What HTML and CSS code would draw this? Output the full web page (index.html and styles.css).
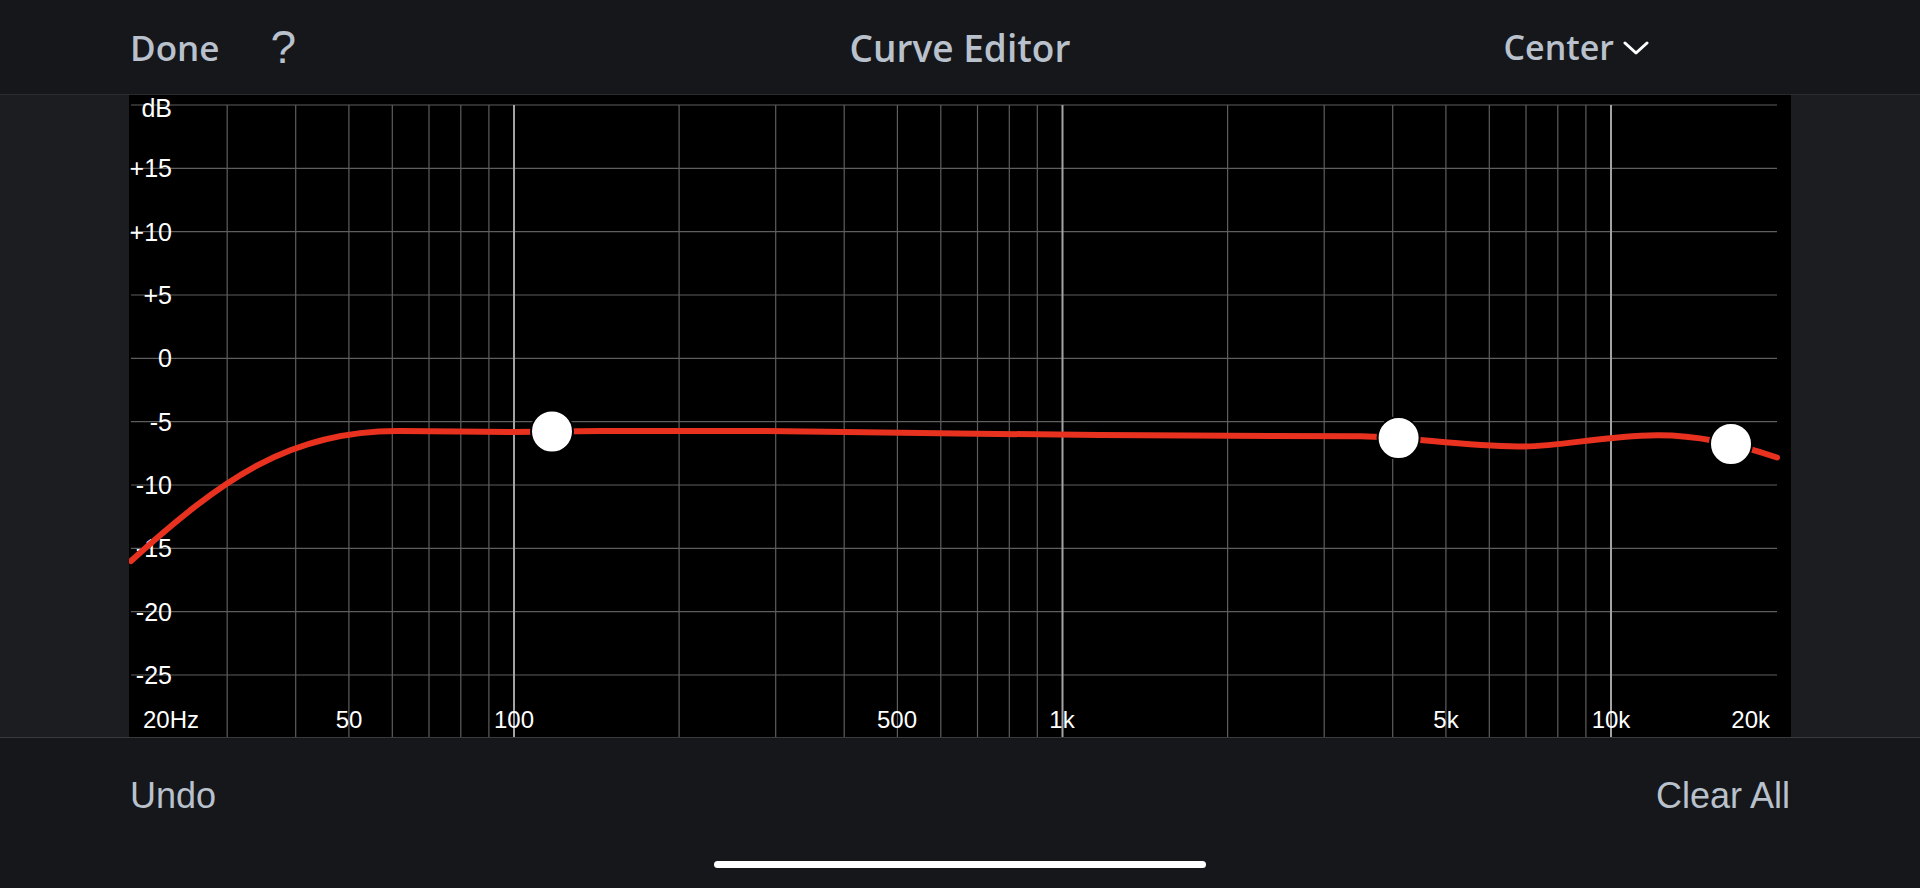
FILE: index.html
```html
<!DOCTYPE html>
<html lang="en">
<head>
    <meta charset="UTF-8">
    <meta name="viewport" content="width=device-width, initial-scale=1.0">
    <title>Curve Editor</title>
    <link rel="stylesheet" href="styles.css">
</head>
<body>

<header class="topbar">
    <div class="topbar-left">
        <button class="nav-btn done">Done</button>
        <button class="help-btn">?</button>
    </div>
    <div class="title">Curve Editor</div>
    <div class="topbar-right">
        <button class="channel-btn">Center
            <svg class="chevron" width="26" height="14" viewBox="0 0 26 14">
                <polyline points="2,2 13,12 24,2"/>
            </svg>
        </button>
    </div>
</header>

<main class="editor">
    <div class="side"></div>
    <div class="graph">
        <svg width="1662" height="642" viewBox="129 95 1662 642">
            <!-- dB rows, 5 dB = 63.33px -->
            <g class="grid-h">
                <line x1="131" y1="105" x2="1777" y2="105"/>
                <line x1="131" y1="168.3" x2="1777" y2="168.3"/>
                <line x1="131" y1="231.7" x2="1777" y2="231.7"/>
                <line x1="131" y1="295" x2="1777" y2="295"/>
                <line x1="131" y1="358.3" x2="1777" y2="358.3"/>
                <line x1="131" y1="421.7" x2="1777" y2="421.7"/>
                <line x1="131" y1="485" x2="1777" y2="485"/>
                <line x1="131" y1="548.3" x2="1777" y2="548.3"/>
                <line x1="131" y1="611.7" x2="1777" y2="611.7"/>
                <line x1="131" y1="675" x2="1777" y2="675"/>
            </g>
            <!-- log frequency columns -->
            <g class="grid-v">
                <line x1="227.2" y1="105" x2="227.2" y2="737"/>
                <line x1="295.7" y1="105" x2="295.7" y2="737"/>
                <line x1="348.9" y1="105" x2="348.9" y2="737"/>
                <line x1="392.3" y1="105" x2="392.3" y2="737"/>
                <line x1="429" y1="105" x2="429" y2="737"/>
                <line x1="460.8" y1="105" x2="460.8" y2="737"/>
                <line x1="488.9" y1="105" x2="488.9" y2="737"/>
                <line x1="679.1" y1="105" x2="679.1" y2="737"/>
                <line x1="775.7" y1="105" x2="775.7" y2="737"/>
                <line x1="844.2" y1="105" x2="844.2" y2="737"/>
                <line x1="897.4" y1="105" x2="897.4" y2="737"/>
                <line x1="940.8" y1="105" x2="940.8" y2="737"/>
                <line x1="977.5" y1="105" x2="977.5" y2="737"/>
                <line x1="1009.3" y1="105" x2="1009.3" y2="737"/>
                <line x1="1037.3" y1="105" x2="1037.3" y2="737"/>
                <line x1="1227.6" y1="105" x2="1227.6" y2="737"/>
                <line x1="1324.2" y1="105" x2="1324.2" y2="737"/>
                <line x1="1392.7" y1="105" x2="1392.7" y2="737"/>
                <line x1="1445.9" y1="105" x2="1445.9" y2="737"/>
                <line x1="1489.3" y1="105" x2="1489.3" y2="737"/>
                <line x1="1526" y1="105" x2="1526" y2="737"/>
                <line x1="1557.8" y1="105" x2="1557.8" y2="737"/>
                <line x1="1585.9" y1="105" x2="1585.9" y2="737"/>
            </g>
            <g class="grid-decade">
                <line x1="514" y1="105" x2="514" y2="737"/>
                <line x1="1062.5" y1="105" x2="1062.5" y2="737"/>
                <line x1="1611" y1="105" x2="1611" y2="737"/>
            </g>

            <g class="axis-db">
                <text x="172" y="108">dB</text>
                <text x="172" y="168.3">+15</text>
                <text x="172" y="231.7">+10</text>
                <text x="172" y="295">+5</text>
                <text x="172" y="358.3">0</text>
                <text x="172" y="421.7">-5</text>
                <text x="172" y="485">-10</text>
                <text x="172" y="548.3">-15</text>
                <text x="172" y="611.7">-20</text>
                <text x="172" y="675">-25</text>
            </g>
            <g class="axis-hz">
                <text x="143" y="728" class="start">20Hz</text>
                <text x="349" y="728">50</text>
                <text x="514" y="728">100</text>
                <text x="897" y="728">500</text>
                <text x="1062" y="728">1k</text>
                <text x="1446" y="728">5k</text>
                <text x="1611" y="728">10k</text>
                <text x="1770" y="728" class="end">20k</text>
            </g>

            <path class="curve" d="M131,561 C222,479 290,430 400,431 L458,431.5 L512,432 L601,431 L766,431 L846,432 L958,433.5 L1100,435 L1231,435.7 L1361,436.3 C1410,437 1460,446 1518,446.6 C1560,447 1600,436 1657,435.3 C1700,435 1740,445 1777,457.5"/>

            <g class="nodes">
                <circle cx="552" cy="431.5" r="21"/>
                <circle cx="1398.6" cy="438" r="21"/>
                <circle cx="1731" cy="444" r="21"/>
            </g>
        </svg>
    </div>
    <div class="side"></div>
</main>

<footer class="bottombar">
    <div class="actions">
        <button class="nav-btn light">Undo</button>
        <button class="nav-btn light">Clear All</button>
    </div>
    <div class="home-bar"></div>
</footer>

</body>
</html>
```

FILE: styles.css
```css
body {
    margin: 0;
    width: 1920px;
    height: 888px;
    overflow: hidden;
    background-color: #16171b;
    font-family: "Liberation Sans", Arial, sans-serif;
    color: #b9c1cc;
}
button {
    background: none;
    border: none;
    padding: 0;
    color: inherit;
    font: inherit;
    cursor: pointer;
}
.topbar {
    height: 94px;
    border-bottom: 1px solid #2b2c30;
    display: grid;
    grid-template-columns: 1fr auto 1fr;
    align-items: center;
    padding: 0 130px;
    font-family: "Open Sans", Lato, sans-serif;
    font-weight: 600;
    font-size: 34px;
}
.topbar-left {
    display: flex;
    align-items: center;
    gap: 51px;
}
.nav-btn.done {
    font-size: 35px;
}
.help-btn {
    font-family: "Liberation Sans", Arial, sans-serif;
    font-weight: 400;
    font-size: 46px;
    line-height: 1;
}
.title {
    text-align: center;
    font-size: 37px;
}
.topbar-right {
    display: flex;
    justify-content: flex-end;
    padding-right: 141px;
}
.channel-btn {
    display: flex;
    align-items: center;
    gap: 9px;
}
.chevron {
    margin-top: 2px;
}
.chevron polyline {
    fill: none;
    stroke: #ffffff;
    stroke-width: 3;
    stroke-linecap: round;
    stroke-linejoin: round;
}
.editor {
    display: flex;
    height: 642px;
}
.side {
    flex: 1;
    background-color: #1c1d21;
}
.graph {
    width: 1662px;
    background-color: #000000;
}
.graph svg {
    display: block;
}
.grid-h line,
.grid-v line {
    stroke: #5e5e5e;
    stroke-width: 1.2;
}
.grid-decade line {
    stroke: #a3a3a3;
    stroke-width: 2;
}
.axis-db text,
.axis-hz text {
    fill: #ffffff;
    font-family: "Liberation Sans", Arial, sans-serif;
    font-size: 25px;
}
.axis-db text {
    text-anchor: end;
    dominant-baseline: central;
}
.axis-hz text {
    font-size: 24px;
    text-anchor: middle;
}
.axis-hz text.start {
    text-anchor: start;
}
.axis-hz text.end {
    text-anchor: end;
}
.curve {
    fill: none;
    stroke: #e8321f;
    stroke-width: 6;
    stroke-linecap: round;
    stroke-linejoin: round;
}
.nodes circle {
    fill: #ffffff;
    stroke: #000000;
    stroke-width: 2;
}
.bottombar {
    height: 150px;
    border-top: 1px solid #3a3b3f;
    display: flex;
    flex-direction: column;
    align-items: center;
}
.actions {
    align-self: stretch;
    height: 115px;
    padding: 0 130px;
    display: flex;
    justify-content: space-between;
    align-items: center;
}
.nav-btn.light {
    font-size: 36px;
}
.home-bar {
    margin-top: 8px;
    width: 492px;
    height: 7px;
    border-radius: 4px;
    background-color: #ffffff;
}
```
